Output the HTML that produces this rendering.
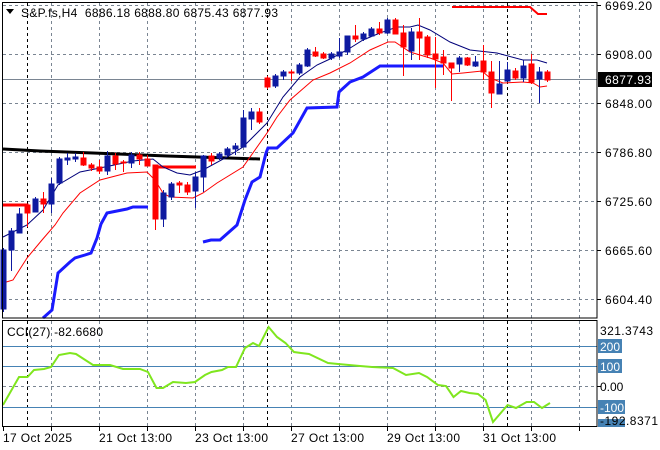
<!DOCTYPE html>
<html><head><meta charset="utf-8"><style>
html,body{margin:0;padding:0;background:#fff;}
svg{display:block;font-family:"Liberation Sans",Tahoma,sans-serif;}
</style></head><body>
<svg width="660" height="450" viewBox="0 0 660 450" xmlns="http://www.w3.org/2000/svg">
<rect width="660" height="450" fill="#fff"/>
<g stroke="#7a8592" stroke-width="1" stroke-dasharray="3,3" fill="none">
<path d="M3 5.5H597M3 54.5H597M3 103.5H597M3 152.5H597M3 201.5H597M3 250.5H597M3 299.5H597"/>
<path d="M51.5 3V318M99.5 3V318M147.5 3V318M195.5 3V318M243.5 3V318M291.5 3V318M339.5 3V318M387.5 3V318M435.5 3V318M483.5 3V318M531.5 3V318M579.5 3V318"/>
<path d="M51.5 321V426M99.5 321V426M147.5 321V426M195.5 321V426M243.5 321V426M291.5 321V426M339.5 321V426M387.5 321V426M435.5 321V426M483.5 321V426M531.5 321V426M579.5 321V426"/>
<path d="M3 386.5H597"/>
</g>
<g stroke="#000" stroke-width="1" stroke-dasharray="3,3">
<path d="M27.5 3V318M267.5 3V318M507.5 3V318M27.5 321V426M267.5 321V426M507.5 321V426"/>
</g>
<path d="M3 79.5H597" stroke="#7a8592" stroke-width="1"/>
<g stroke="#4682b4" stroke-width="1"><path d="M3 346.5H597M3 366.5H597M3 407.5H597"/></g>

<path d="M3 149 L40 151 L93 153 L167 156 L260 159" stroke="#000" stroke-width="3" fill="none"/>
<path d="M3 205 H27 V213" stroke="#f00" stroke-width="3" fill="none"/>
<path d="M155 167 H196" stroke="#f00" stroke-width="3" fill="none"/>
<path d="M452 7 H530 L538 14 H547" stroke="#f00" stroke-width="2" fill="none"/>
<path d="M43 318 L52 310 L58 273 L70 262 L75 258 L85 255 L91 253 L97 238 L101 224 L107 213 L127 209 L133 207 L148 207" stroke="#1a1aff" stroke-width="3" fill="none"/>
<path d="M203 242 L211 240 L220 240 L237 225 L245 200 L252 182 L260 177 L266 153 L268 148 L277 148 L293 133 L307 108 L337 107 L339 92 L350 82 L363 77 L380 66 L443 66" stroke="#1a1aff" stroke-width="3" fill="none"/>
<path d="M3 237 L27 225 L43 210 L58 185 L80 172 L100 168 L133 161 L153 159 L163 167 L177 173 L190 175 L203 170 L227 157 L243 147 L257 133 L267 123 L283 97 L300 77 L317 65 L330 59 L347 50 L363 40 L380 33 L397 27 L410 27 L418 25 L430 30 L450 42 L470 50 L497 53 L523 60 L537 60 L547 63" stroke="#00007a" stroke-width="1" fill="none"/>
<path d="M3 283 L13 280 L27 258 L42 240 L55 225 L63 213 L80 193 L100 180 L127 173 L147 172 L155 180 L163 193 L170 197 L193 198 L203 193 L217 183 L243 167 L267 133 L277 117 L290 100 L313 80 L330 73 L350 63 L370 50 L388 42 L395 42 L410 52 L430 58 L443 63 L452 74 L463 73 L482 71 L490 78 L503 83 L523 82 L533 83 L540 87 L547 86" stroke="#f00" stroke-width="1" fill="none"/>

<g stroke-width="1">
<g stroke="#0e1aa0" fill="#0e1aa0">
<path d="M3.5 248V312M11.5 228V271M19.5 208V233M35.5 197V212M51.5 178V213M59.5 157V185M67.5 153V165M75.5 153V162M107.5 151V175M131.5 152V168M163.5 190V227M171.5 182V200M195.5 172V208M203.5 155V192M219.5 152V160M227.5 147V157M235.5 143V155M243.5 110V147M251.5 108V130M275.5 74V88M283.5 70V80M299.5 63V75M307.5 48V67M331.5 52V60M339.5 38V58M347.5 36V55M363.5 32V41M371.5 27V37M387.5 18V34M411.5 28V60M459.5 56V72M475.5 56V67M499.5 61V94M507.5 62V81M523.5 60V82M539.5 67V103" fill="none"/>
<rect x="1" y="250" width="5" height="59"/><rect x="9" y="231" width="5" height="19"/><rect x="17" y="214" width="5" height="19"/>
<rect x="33" y="199" width="5" height="13"/><rect x="49" y="184" width="5" height="20"/><rect x="57" y="159" width="5" height="24"/>
<rect x="65" y="158" width="5" height="2"/><rect x="73" y="157" width="5" height="2"/><rect x="105" y="156" width="5" height="15"/>
<rect x="129" y="155" width="5" height="8"/><rect x="161" y="193" width="5" height="26"/><rect x="169" y="184" width="5" height="13"/>
<rect x="193" y="177" width="5" height="14"/><rect x="201" y="156" width="5" height="21"/><rect x="217" y="154" width="5" height="4"/>
<rect x="225" y="149" width="5" height="6"/><rect x="233" y="146" width="5" height="3"/><rect x="241" y="118" width="5" height="29"/>
<rect x="249" y="112" width="5" height="7"/><rect x="273" y="76" width="5" height="10"/><rect x="281" y="72" width="5" height="4"/>
<rect x="297" y="65" width="5" height="8"/><rect x="305" y="50" width="5" height="16"/><rect x="329" y="54" width="5" height="4"/>
<rect x="337" y="52" width="5" height="4"/><rect x="345" y="36" width="5" height="16"/><rect x="361" y="34" width="5" height="5"/>
<rect x="369" y="29" width="5" height="7"/><rect x="385" y="20" width="5" height="13"/><rect x="409" y="32" width="5" height="19"/>
<rect x="457" y="58" width="5" height="6"/><rect x="473" y="62" width="5" height="4"/><rect x="497" y="84" width="5" height="10"/>
<rect x="505" y="70" width="5" height="11"/><rect x="521" y="66" width="5" height="12"/><rect x="537" y="72" width="5" height="7"/>
</g>
<g stroke="#f00" fill="#f00">
<path d="M27.5 205V227M43.5 192V213M83.5 152V166M91.5 163V171M99.5 160V174M115.5 153V170M123.5 160V172M139.5 152V165M147.5 155V166M155.5 165V230M179.5 181V193M187.5 182V195M211.5 153V165M259.5 108V124M267.5 76V89M291.5 70V81M315.5 47V57M323.5 52V59M355.5 25V42M379.5 22V35M395.5 18V34M403.5 25V76M419.5 18V60M427.5 35V58M435.5 37V88M443.5 50V75M451.5 63V101M467.5 57V66M483.5 45V80M491.5 61V108M515.5 68V80M531.5 54V84M547.5 70V82" fill="none"/>
<rect x="25" y="205" width="5" height="8"/><rect x="41" y="199" width="5" height="5"/><rect x="81" y="158" width="5" height="7"/>
<rect x="89" y="165" width="5" height="3"/><rect x="97" y="167" width="5" height="4"/><rect x="113" y="156" width="5" height="8"/>
<rect x="121" y="162" width="5" height="1"/><rect x="137" y="155" width="5" height="4"/><rect x="145" y="159" width="5" height="7"/>
<rect x="153" y="165" width="5" height="54"/><rect x="177" y="183" width="5" height="2"/><rect x="185" y="185" width="5" height="7"/>
<rect x="209" y="156" width="5" height="5"/><rect x="257" y="112" width="5" height="10"/><rect x="265" y="78" width="5" height="9"/>
<rect x="289" y="72" width="5" height="1"/><rect x="313" y="52" width="5" height="4"/><rect x="321" y="54" width="5" height="4"/>
<rect x="353" y="36" width="5" height="3"/><rect x="377" y="29" width="5" height="4"/><rect x="393" y="20" width="5" height="14"/>
<rect x="401" y="33" width="5" height="14"/><rect x="417" y="32" width="5" height="6"/><rect x="425" y="37" width="5" height="18"/>
<rect x="433" y="54" width="5" height="5"/><rect x="441" y="57" width="5" height="6"/><rect x="449" y="63" width="5" height="5"/>
<rect x="465" y="58" width="5" height="7"/><rect x="481" y="61" width="5" height="11"/><rect x="489" y="72" width="5" height="21"/>
<rect x="513" y="71" width="5" height="7"/><rect x="529" y="64" width="5" height="18"/><rect x="545" y="72" width="5" height="8"/>
</g>
</g>

<path d="M3 405 L19 377 L27.5 377 L34 370 L44 369 L51 367 L59 355 L70 353 L76 354 L93 365 L110 365 L123 369 L140 369 L148 372 L156.5 388 L163 388 L173 382 L186 383 L195 382 L205 375 L211.5 372 L222 370 L228 367 L236 367 L245 348 L253 343 L259 346 L268.6 327 L277 337 L285.5 343 L294 352 L301 353 L309 354 L328 363 L338 364 L360 366 L372 367 L393 368 L406 375 L419 373 L427 377 L438 385 L446 386 L453.5 397 L461 391 L469.5 393 L478 394 L485.6 400 L493 422 L507.6 405 L516 408 L526.6 402 L534 402 L542 408 L550 403" stroke="#7fe61e" stroke-width="2" fill="none"/>

<g stroke="#000" stroke-width="1" fill="none">
<rect x="2.5" y="2.5" width="594.5" height="315.5"/>
<rect x="2.5" y="320.5" width="594.5" height="106"/>
<path d="M597 5.5h4M597 54.5h4M597 103.5h4M597 152.5h4M597 201.5h4M597 250.5h4M597 299.5h4M597 386.5h4"/>
<path d="M3.5 427v4M51.5 427v4M99.5 427v4M147.5 427v4M195.5 427v4M243.5 427v4M291.5 427v4M339.5 427v4M387.5 427v4M435.5 427v4M483.5 427v4M531.5 427v4M579.5 427v4"/>
</g>

<path d="M6 9 L14 9 L10 14 Z" fill="#000"/>
<text x="21" y="17" font-size="12" fill="#000" textLength="257" lengthAdjust="spacing" xml:space="preserve">S&amp;P.fs,H4  6886.18 6888.80 6875.43 6877.93</text>

<g font-size="12" fill="#000">
<text x="605" y="10" textLength="47">6969.20</text>
<text x="605" y="59" textLength="47">6908.00</text>
<text x="605" y="108" textLength="47">6848.00</text>
<text x="605" y="157" textLength="47">6786.80</text>
<text x="605" y="206" textLength="47">6725.60</text>
<text x="605" y="255" textLength="47">6665.60</text>
<text x="605" y="304" textLength="47">6604.40</text>
</g>
<rect x="598" y="72" width="54" height="15" fill="#000"/>
<text x="605" y="84" font-size="12" fill="#fff" textLength="46">6877.93</text>

<text x="7" y="336" font-size="12" fill="#000" textLength="96">CCI(27) -82.6680</text>
<rect x="598" y="339" width="24" height="14" fill="#4682b4"/>
<rect x="598" y="359" width="24" height="14" fill="#4682b4"/>
<rect x="598" y="400" width="27" height="14" fill="#4682b4"/>
<rect x="598" y="419" width="27" height="8" fill="#4682b4"/>
<g font-size="12">
<text x="600" y="335" fill="#000" textLength="53">321.3743</text>
<text x="600" y="351" fill="#fff">200</text>
<text x="600" y="371" fill="#fff">100</text>
<text x="600" y="391" fill="#000">0.00</text>
<text x="600" y="412" fill="#fff">-100</text>
<text x="600" y="425" fill="#000" textLength="58">-192.8371</text>
</g>

<g font-size="12" fill="#000">
<text x="3" y="442" textLength="69">17 Oct 2025</text>
<text x="99" y="442" textLength="73">21 Oct 13:00</text>
<text x="195" y="442" textLength="73">23 Oct 13:00</text>
<text x="291" y="442" textLength="73">27 Oct 13:00</text>
<text x="387" y="442" textLength="73">29 Oct 13:00</text>
<text x="483" y="442" textLength="73">31 Oct 13:00</text>
</g>
</svg>
</body></html>
